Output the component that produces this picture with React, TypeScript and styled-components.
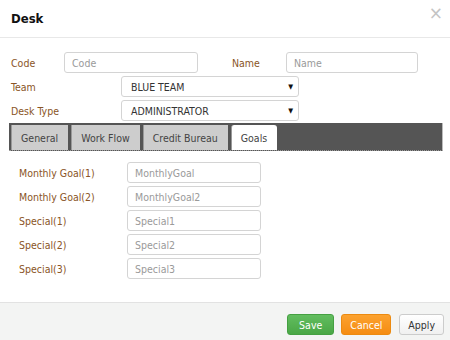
import * as React from "react"
import styled, { createGlobalStyle } from "styled-components"

const GlobalStyle = createGlobalStyle`
  body {
    margin: 0;
    background: #fff;
    font-family: "DejaVu Sans Condensed", "DejaVu Sans", sans-serif;
  }
  * {
    box-sizing: border-box;
  }
`

const tabs = ["General", "Work Flow", "Credit Bureau", "Goals"]

const goals = [
  { label: "Monthly Goal(1)", placeholder: "MonthlyGoal" },
  { label: "Monthly Goal(2)", placeholder: "MonthlyGoal2" },
  { label: "Special(1)", placeholder: "Special1" },
  { label: "Special(2)", placeholder: "Special2" },
  { label: "Special(3)", placeholder: "Special3" },
]

function App() {
  return (
    <Dialog>
      <GlobalStyle />
      <Header>
        <Title>Desk</Title>
        <Close>×</Close>
      </Header>
      <Body>
        <Row>
          <Label $w={53}>Code</Label>
          <Input $w={134} placeholder="Code" />
          <Label $w={54} style={{ marginLeft: 34 }}>Name</Label>
          <Input $w={132} placeholder="Name" />
        </Row>
        <Row>
          <Label $w={110}>Team</Label>
          <Select>
            <span>BLUE TEAM</span>
            <Arrow>▼</Arrow>
          </Select>
        </Row>
        <Row>
          <Label $w={110}>Desk Type</Label>
          <Select>
            <span>ADMINISTRATOR</span>
            <Arrow>▼</Arrow>
          </Select>
        </Row>
        <TabBar>
          {tabs.map((t) => (
            <Tab key={t} $active={t === "Goals"}>
              {t}
            </Tab>
          ))}
        </TabBar>
        <Goals>
          {goals.map((g) => (
            <Row key={g.label}>
              <Label $w={108}>{g.label}</Label>
              <Input $w={134} placeholder={g.placeholder} />
            </Row>
          ))}
        </Goals>
      </Body>
      <Footer>
        <Button $kind="save">Save</Button>
        <Button $kind="cancel">Cancel</Button>
        <Button $kind="apply">Apply</Button>
      </Footer>
    </Dialog>
  )
}

const Dialog = styled.div`
  width: 450px;
  height: 340px;
  display: flex;
  flex-direction: column;
  background: #fff;
  overflow: hidden;
`

const Header = styled.div`
  height: 38px;
  flex-shrink: 0;
  display: flex;
  align-items: center;
  justify-content: space-between;
  padding: 0 7px 0 11px;
  border-bottom: 1px solid #e8e8e8;
`

const Title = styled.div`
  font: bold 13px "DejaVu Sans Condensed", "DejaVu Sans", sans-serif;
  color: #111;
  margin-top: -1px;
`

const Close = styled.div`
  font: 17px "DejaVu Sans", sans-serif;
  color: #c4c4c4;
  margin-top: -12px;
`

const Body = styled.div`
  flex: 1;
  padding: 14px 7px 0 9px;
  display: flex;
  flex-direction: column;
  gap: 3px;
`

const Row = styled.div`
  display: flex;
  align-items: center;
  height: 21px;
  padding-left: 2px;
`

const Label = styled.div<{ $w: number }>`
  width: ${(p) => p.$w}px;
  flex-shrink: 0;
  font-size: 10.5px;
  color: #8a5526;
`

const Input = styled.input<{ $w: number }>`
  width: ${(p) => p.$w}px;
  height: 21px;
  border: 1px solid #d4d4d4;
  border-radius: 3px;
  padding: 0 7px;
  font: 10.5px "DejaVu Sans Condensed", "DejaVu Sans", sans-serif;
  color: #333;
  outline: none;
  &::placeholder {
    color: #9a9a9a;
  }
`

const Select = styled.div`
  width: 178px;
  height: 21px;
  border: 1px solid #d4d4d4;
  border-radius: 3px;
  padding: 0 5px 0 9px;
  display: flex;
  align-items: center;
  justify-content: space-between;
  font-size: 10.5px;
  color: #333;
`

const Arrow = styled.span`
  font-size: 7px;
  color: #111;
`

const TabBar = styled.div`
  margin-top: -1px;
  height: 28px;
  background: #555;
  border-right: 1px solid #bbb;
  border-bottom: 1px dotted #999;
  display: flex;
  align-items: flex-end;
  gap: 3px;
  padding: 0 0 0 2px;
  width: 434px;
`

const Tab = styled.div<{ $active?: boolean }>`
  height: 25px;
  padding: 0 10px 0 9px;
  display: flex;
  align-items: center;
  font-size: 10.5px;
  color: #444;
  background: ${(p) => (p.$active ? "#fff" : "#cdcdcd")};
  border-radius: ${(p) => (p.$active ? "3px 3px 0 0" : "0")};
  border-left: 1px solid #999;
`

const Goals = styled.div`
  display: flex;
  flex-direction: column;
  gap: 3px;
  padding: 8px 0 0 8px;
`

const Footer = styled.div`
  height: 38px;
  flex-shrink: 0;
  border-top: 1px solid #e2e2e2;
  background: #f3f4f3;
  display: flex;
  justify-content: flex-end;
  align-items: flex-start;
  gap: 7px;
  padding: 11px 6px 0 0;
`

const colors = {
  save: { bg: "linear-gradient(#62bd5f, #4aa746)", border: "#45a042", fg: "#fff" },
  cancel: { bg: "linear-gradient(#fca22f, #f58c12)", border: "#ec8a10", fg: "#fff" },
  apply: { bg: "linear-gradient(#fff, #f0f0f0)", border: "#ccc", fg: "#333" },
}

const Button = styled.button<{ $kind: keyof typeof colors }>`
  height: 21px;
  padding: 0 ${(p) => (p.$kind === "save" ? 11 : 8)}px;
  margin-left: ${(p) => (p.$kind === "apply" ? 1 : 0)}px;
  border-radius: 3px;
  border: 1px solid ${(p) => colors[p.$kind].border};
  background: ${(p) => colors[p.$kind].bg};
  color: ${(p) => colors[p.$kind].fg};
  font: 10.5px "DejaVu Sans Condensed", "DejaVu Sans", sans-serif;
  cursor: pointer;
`

export default App
